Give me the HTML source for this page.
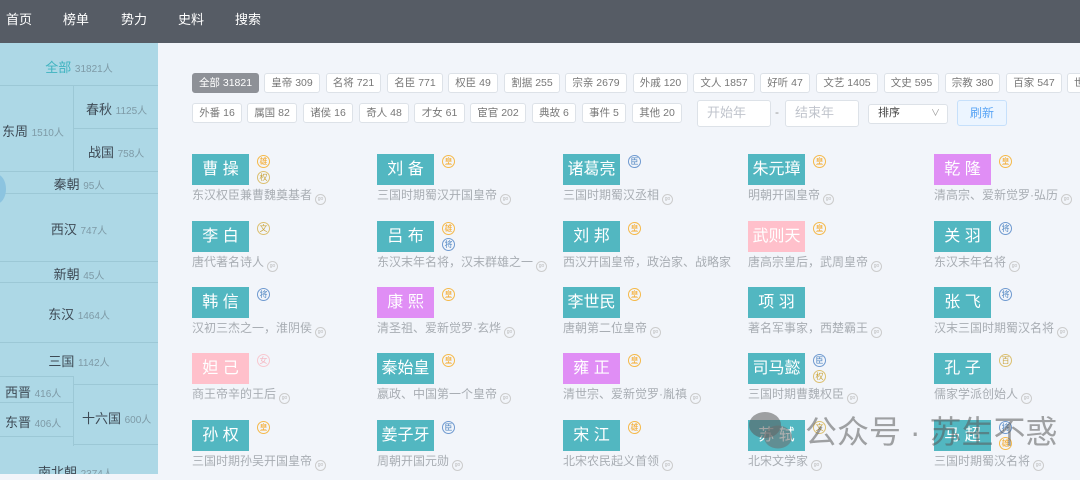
<!DOCTYPE html>
<html><head><meta charset="utf-8"><style>
*{margin:0;padding:0;box-sizing:border-box}
body{width:1080px;height:474px;overflow:hidden;background:#f2f5fa;font-family:"Liberation Sans","Noto Sans CJK SC",sans-serif;position:relative}
.nav{position:absolute;left:0;top:0;width:1080px;height:43px;background:#565c65}
.nav span{position:absolute;top:9px;color:#fff;font-size:13px}
.side{position:absolute;left:0;top:43px;width:158px;height:431px;background:#add8e6;overflow:hidden}
.s{position:absolute;font-size:13px;color:#3e4a55;text-align:center;white-space:nowrap}
.s i{font-style:normal;font-size:10px;color:#7e9aa6}
.hl{position:absolute;height:1px;background:#9cc8d6}
.vl{position:absolute;width:1px;background:#9cc8d6}
.t{position:absolute;height:20px;border:1px solid #dde2e8;background:#fff;border-radius:3px;font-size:10.5px;color:#777;line-height:18px;text-align:center;white-space:nowrap}
.t.on{background:#8e9197;color:#fff;border-color:#8e9197}
.in{position:absolute;background:#fff;border:1px solid #dde2e8;border-radius:3px;font-size:13px;color:#c0c4cc;line-height:24px;padding-left:9px}
.c{position:absolute;width:180px;height:60px}
.c .n{position:absolute;left:0;top:0;width:57px;height:31px;background:#52b7c1;color:#fff;font-size:16px;line-height:31px;text-align:center;white-space:nowrap}
.c .n.p{background:#e08ef5}.c .n.k{background:#ffc0cb}
.c .d{position:absolute;left:0;top:32px;font-size:12px;color:#a8adb3;white-space:nowrap}
.c .d b{display:inline-block;width:11px;height:11px;border:1px solid #ccc;border-radius:50%;vertical-align:-1px;margin-left:3px;font-size:5px;line-height:9px;text-align:center;color:#bbb;font-weight:normal}
.b{position:absolute;left:65px;width:13px;height:13px;border:1px solid;border-radius:50%;font-size:8px;line-height:11px;text-align:center;font-style:normal}
.o{color:#f5a623;border-color:#f5b94a}.g{color:#caa43a;border-color:#dcc070}.u{color:#4a82c0;border-color:#6f9ad0}.r{color:#f5b5c0;border-color:#f8c8d0}
.b1{top:1px}.b2{top:17px}
.wm{position:absolute;left:805px;top:412px;font-size:32px;line-height:40px;color:rgba(90,90,90,.55);letter-spacing:0;white-space:nowrap}
</style></head><body>
<div class="nav"><span style="left:6px">首页</span><span style="left:63px">榜单</span><span style="left:121px">势力</span><span style="left:178px">史料</span><span style="left:235px">搜索</span></div>
<div class="side">
<div class="s" style="left:0;width:158px;top:14px;color:#3fb3c0">全部 <i>31821人</i></div>
<div class="hl" style="left:0;width:158px;top:42px"></div>
<div class="vl" style="left:73px;top:42px;height:87px"></div>
<div class="s" style="left:2px;top:78px">东周 <i>1510人</i></div>
<div class="s" style="left:86px;top:56px">春秋 <i>1125人</i></div>
<div class="hl" style="left:73px;width:85px;top:85px"></div>
<div class="s" style="left:88px;top:99px">战国 <i>758人</i></div>
<div class="hl" style="left:0;width:158px;top:128px"></div>
<div class="s" style="left:0;width:158px;top:131px">秦朝 <i>95人</i></div>
<div class="hl" style="left:0;width:158px;top:150px"></div>
<div class="s" style="left:0;width:158px;top:176px">西汉 <i>747人</i></div>
<div class="hl" style="left:0;width:158px;top:218px"></div>
<div class="s" style="left:0;width:158px;top:221px">新朝 <i>45人</i></div>
<div class="hl" style="left:0;width:158px;top:239px"></div>
<div class="s" style="left:0;width:158px;top:261px">东汉 <i>1464人</i></div>
<div class="hl" style="left:0;width:158px;top:299px"></div>
<div class="s" style="left:0;width:158px;top:308px">三国 <i>1142人</i></div>
<div class="hl" style="left:0;width:73px;top:333px"></div>
<div class="vl" style="left:73px;top:333px;height:70px"></div>
<div class="hl" style="left:73px;width:85px;top:341px"></div>
<div class="s" style="left:5px;top:339px">西晋 <i>416人</i></div>
<div class="hl" style="left:0;width:73px;top:359px"></div>
<div class="s" style="left:5px;top:369px">东晋 <i>406人</i></div>
<div class="hl" style="left:0;width:73px;top:393px"></div>
<div class="hl" style="left:73px;width:85px;top:401px"></div>
<div class="s" style="left:82px;top:365px">十六国 <i>600人</i></div>
<div class="s" style="left:38px;top:419px">南北朝 <i>2374人</i></div>
<div style="position:absolute;left:-14px;top:131px;width:20px;height:30px;border-radius:50%;background:#8cc4e0"></div>
</div>

<div class="t on" style="left:192px;top:73px;width:67px">全部 31821</div>
<div class="t" style="left:264px;top:73px;width:56px">皇帝 309</div>
<div class="t" style="left:326px;top:73px;width:55px">名将 721</div>
<div class="t" style="left:387px;top:73px;width:56px">名臣 771</div>
<div class="t" style="left:448px;top:73px;width:50px">权臣 49</div>
<div class="t" style="left:504px;top:73px;width:56px">割据 255</div>
<div class="t" style="left:565px;top:73px;width:62px">宗亲 2679</div>
<div class="t" style="left:633px;top:73px;width:55px">外戚 120</div>
<div class="t" style="left:693px;top:73px;width:62px">文人 1857</div>
<div class="t" style="left:760px;top:73px;width:50px">好听 47</div>
<div class="t" style="left:816px;top:73px;width:62px">文艺 1405</div>
<div class="t" style="left:884px;top:73px;width:55px">文史 595</div>
<div class="t" style="left:945px;top:73px;width:55px">宗教 380</div>
<div class="t" style="left:1006px;top:73px;width:56px">百家 547</div>
<div class="t" style="left:1067px;top:73px;width:40px;text-align:left;padding-left:6px">世</div>

<div class="t" style="left:192px;top:103px;width:50px">外番 16</div>
<div class="t" style="left:247px;top:103px;width:50px">属国 82</div>
<div class="t" style="left:303px;top:103px;width:50px">诸侯 16</div>
<div class="t" style="left:359px;top:103px;width:50px">奇人 48</div>
<div class="t" style="left:414px;top:103px;width:51px">才女 61</div>
<div class="t" style="left:470px;top:103px;width:56px">宦官 202</div>
<div class="t" style="left:532px;top:103px;width:44px">典故 6</div>
<div class="t" style="left:582px;top:103px;width:44px">事件 5</div>
<div class="t" style="left:632px;top:103px;width:50px">其他 20</div>
<div class="in" style="left:697px;top:100px;width:74px;height:27px">开始年</div>
<div style="position:absolute;left:775px;top:105px;font-size:12px;color:#999">-</div>
<div class="in" style="left:785px;top:100px;width:74px;height:27px">结束年</div>
<div class="in" style="left:868px;top:104px;width:80px;height:20px;line-height:16px;font-size:11px;color:#444;padding-left:9px">排序<span style="position:absolute;right:7px;top:0;color:#999;font-size:9px">∨</span></div>
<div style="position:absolute;left:957px;top:100px;width:50px;height:26px;background:#ecf5ff;border:1px solid #c6e0fb;border-radius:3px;color:#5aa5f5;font-size:12px;line-height:24px;text-align:center">刷新</div>

<div class="c" style="left:192px;top:154px"><div class="n">曹 操</div><i class="b b1 o">雄</i><i class="b b2 g">权</i><div class="d">东汉权臣兼曹魏奠基者<b>go</b></div></div>
<div class="c" style="left:377px;top:154px"><div class="n">刘 备</div><i class="b b1 o">皇</i><div class="d">三国时期蜀汉开国皇帝<b>go</b></div></div>
<div class="c" style="left:563px;top:154px"><div class="n">诸葛亮</div><i class="b b1 u">臣</i><div class="d">三国时期蜀汉丞相<b>go</b></div></div>
<div class="c" style="left:748px;top:154px"><div class="n">朱元璋</div><i class="b b1 o">皇</i><div class="d">明朝开国皇帝<b>go</b></div></div>
<div class="c" style="left:934px;top:154px"><div class="n p">乾 隆</div><i class="b b1 o">皇</i><div class="d">清高宗、爱新觉罗·弘历<b>go</b></div></div>
<div class="c" style="left:192px;top:221px"><div class="n">李 白</div><i class="b b1 g">文</i><div class="d">唐代著名诗人<b>go</b></div></div>
<div class="c" style="left:377px;top:221px"><div class="n">吕 布</div><i class="b b1 o">雄</i><i class="b b2 u">将</i><div class="d">东汉末年名将，汉末群雄之一<b>go</b></div></div>
<div class="c" style="left:563px;top:221px"><div class="n">刘 邦</div><i class="b b1 o">皇</i><div class="d">西汉开国皇帝，政治家、战略家</div></div>
<div class="c" style="left:748px;top:221px"><div class="n k">武则天</div><i class="b b1 o">皇</i><div class="d">唐高宗皇后，武周皇帝<b>go</b></div></div>
<div class="c" style="left:934px;top:221px"><div class="n">关 羽</div><i class="b b1 u">将</i><div class="d">东汉末年名将<b>go</b></div></div>
<div class="c" style="left:192px;top:287px"><div class="n">韩 信</div><i class="b b1 u">将</i><div class="d">汉初三杰之一，淮阴侯<b>go</b></div></div>
<div class="c" style="left:377px;top:287px"><div class="n p">康 熙</div><i class="b b1 o">皇</i><div class="d">清圣祖、爱新觉罗·玄烨<b>go</b></div></div>
<div class="c" style="left:563px;top:287px"><div class="n">李世民</div><i class="b b1 o">皇</i><div class="d">唐朝第二位皇帝<b>go</b></div></div>
<div class="c" style="left:748px;top:287px"><div class="n">项 羽</div><div class="d">著名军事家，西楚霸王<b>go</b></div></div>
<div class="c" style="left:934px;top:287px"><div class="n">张 飞</div><i class="b b1 u">将</i><div class="d">汉末三国时期蜀汉名将<b>go</b></div></div>
<div class="c" style="left:192px;top:353px"><div class="n k">妲 己</div><i class="b b1 r">女</i><div class="d">商王帝辛的王后<b>go</b></div></div>
<div class="c" style="left:377px;top:353px"><div class="n">秦始皇</div><i class="b b1 o">皇</i><div class="d">嬴政、中国第一个皇帝<b>go</b></div></div>
<div class="c" style="left:563px;top:353px"><div class="n p">雍 正</div><i class="b b1 o">皇</i><div class="d">清世宗、爱新觉罗·胤禛<b>go</b></div></div>
<div class="c" style="left:748px;top:353px"><div class="n">司马懿</div><i class="b b1 u">臣</i><i class="b b2 g">权</i><div class="d">三国时期曹魏权臣<b>go</b></div></div>
<div class="c" style="left:934px;top:353px"><div class="n">孔 子</div><i class="b b1 g">百</i><div class="d">儒家学派创始人<b>go</b></div></div>
<div class="c" style="left:192px;top:420px"><div class="n">孙 权</div><i class="b b1 o">皇</i><div class="d">三国时期孙吴开国皇帝<b>go</b></div></div>
<div class="c" style="left:377px;top:420px"><div class="n">姜子牙</div><i class="b b1 u">臣</i><div class="d">周朝开国元勋<b>go</b></div></div>
<div class="c" style="left:563px;top:420px"><div class="n">宋 江</div><i class="b b1 o">雄</i><div class="d">北宋农民起义首领<b>go</b></div></div>
<div class="c" style="left:748px;top:420px"><div class="n">苏 轼</div><i class="b b1 g">文</i><div class="d">北宋文学家<b>go</b></div></div>
<div class="c" style="left:934px;top:420px"><div class="n">马 超</div><i class="b b1 u">将</i><i class="b b2 o">雄</i><div class="d">三国时期蜀汉名将<b>go</b></div></div>

<svg style="position:absolute;left:748px;top:410px" width="46" height="42" viewBox="0 0 46 42">
<ellipse cx="17" cy="15" rx="16" ry="13" fill="rgba(90,90,90,.55)"/>
<ellipse cx="30" cy="27" rx="14" ry="11.5" fill="rgba(110,110,110,.55)"/>
</svg>
<div class="wm">公众号 · 苏生不惑</div>
</body></html>
